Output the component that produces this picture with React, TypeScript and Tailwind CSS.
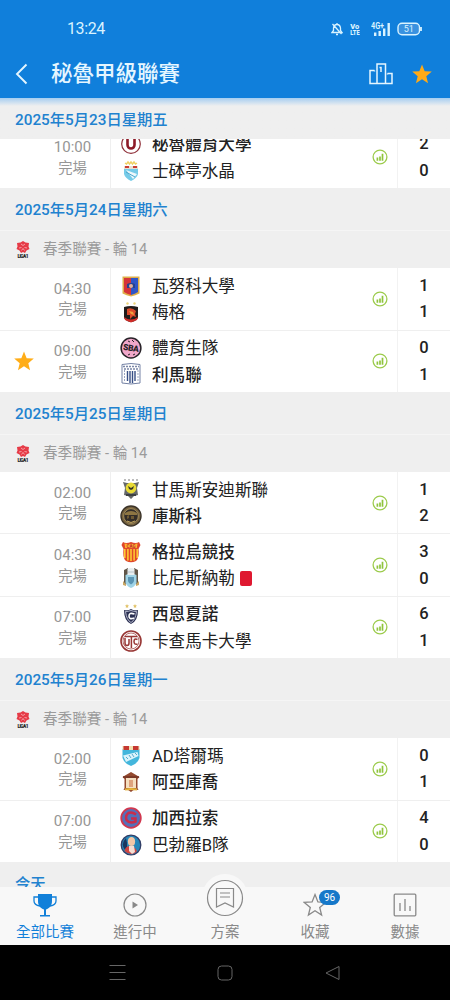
import type { ReactNode } from "react";
import clsx from "clsx";

type Team = { name: string; score: number; crest: string; winner?: boolean; redCard?: boolean };
type Match = { time: string; home: Team; away: Team; favorite?: boolean };
type Day = { date: string; matches: Match[] };

const STAR = "M12 1.6l2.9 7.3 7.8.5-6 5 1.9 7.6L12 17.8 5.4 22l1.9-7.6-6-5 7.8-.5z";

const firstMatch: Match = {
    time: "10:00",
    home: { name: "秘魯體育大學", score: 2, crest: "universitario", winner: true },
    away: { name: "士砵亭水晶", score: 0, crest: "cristal" },
};

const days: Day[] = [
    {
        date: "2025年5月24日星期六",
        matches: [
            {
                time: "04:30",
                home: { name: "瓦努科大學", score: 1, crest: "huanuco" },
                away: { name: "梅格", score: 1, crest: "melgar" },
            },
            {
                time: "09:00",
                favorite: true,
                home: { name: "體育生隊", score: 0, crest: "boys" },
                away: { name: "利馬聯", score: 1, crest: "lima", winner: true },
            },
        ],
    },
    {
        date: "2025年5月25日星期日",
        matches: [
            {
                time: "02:00",
                home: { name: "甘馬斯安迪斯聯", score: 1, crest: "comerciantes" },
                away: { name: "庫斯科", score: 2, crest: "cusco", winner: true },
            },
            {
                time: "04:30",
                home: { name: "格拉烏競技", score: 3, crest: "grau", winner: true },
                away: { name: "比尼斯納勒", score: 0, crest: "binacional", redCard: true },
            },
            {
                time: "07:00",
                home: { name: "西恩夏諾", score: 6, crest: "cienciano", winner: true },
                away: { name: "卡查馬卡大學", score: 1, crest: "utc" },
            },
        ],
    },
    {
        date: "2025年5月26日星期一",
        matches: [
            {
                time: "02:00",
                home: { name: "AD塔爾瑪", score: 0, crest: "tarma" },
                away: { name: "阿亞庫喬", score: 1, crest: "ayacucho", winner: true },
            },
            {
                time: "07:00",
                home: { name: "加西拉索", score: 4, crest: "garcilaso", winner: true },
                away: { name: "巴勃羅B隊", score: 0, crest: "pablo" },
            },
        ],
    },
];

const crests: Record<string, ReactNode> = {
    universitario: (
        <>
            <circle cx="11" cy="11" r="9.3" fill="#fff" stroke="#8f2f38" strokeWidth="1.2" />
            <path d="M7.5 5v7a3.500 3.500 0 0 0 7 0V5" fill="none" stroke="#8d1a27" strokeWidth="2.6" />
            <path d="M5.500 5h4M12.500 5h4" stroke="#8d1a27" />
        </>
    ),
    cristal: (
        <>
            <path d="M4 6h14v8q-1 4-7 7-6-3-7-7z" fill="#76cbe8" />
            <path d="M6 10l11 4-4 5z" fill="#eef8fb" />
            <path d="M6 12l9 5" stroke="#4ba6cd" />
            <path d="M4 6h14v3H4z" fill="#eadfd0" />
            <path d="M5 6h4v2H5zM13 6h4v2h-4z" fill="#c93c32" />
            <path d="M5 3l1.5 1L8 2l1.5 2L11 2l1.5 2L14 2l1.5 2L17 3" fill="none" stroke="#efd063" strokeWidth="1.4" />
        </>
    ),
    huanuco: (
        <>
            <path d="M2.5 1.5h17v17q-4 2-8.500 3-4.500-1-8.500-3z" fill="#dfae48" />
            <path d="M4 3h7v17q-4-1-7-3z" fill="#d53438" />
            <path d="M11 3h7v14q-3 2-7 3z" fill="#2f55c7" />
            <path d="M7 9q4-2 8 0v4H7z" fill="#27418c" />
            <circle cx="11" cy="11" r="2" fill="#e0b0a0" />
        </>
    ),
    melgar: (
        <>
            <path d="M4 6q7-2 14 0v11q-3 4-7 4-4 0-7-4z" fill="#221c1b" />
            <path d="M4 16q7 5 14 0l-1 3-6 2.500L5 19z" fill="#cf2c28" />
            <path d="M7 8q5-2 9 2l-1 3 1 3-3-1-3 3 0-4-3 0z" fill="#dd4a2b" />
            <path d="M9 10l4 1 1 3-3-1z" fill="#eda23f" />
            <circle cx="7.5" cy="2.5" r="1.2" fill="#eed57c" />
            <circle cx="14.5" cy="2.5" r="1.2" fill="#eed57c" />
        </>
    ),
    boys: (
        <>
            <circle cx="11" cy="11" r="9.9" fill="#f1a7ca" stroke="#292329" strokeWidth="1.5" />
            <path d="M8 4l2 1M12 3l2 2M8 18l2-1M13 18l2-1" stroke="#292329" />
            <text x="11" y="14" textAnchor="middle" fontSize="8.5" fontWeight="900" textLength="16" fill="#292329" transform="rotate(8 11 11)">SBA</text>
        </>
    ),
    lima: (
        <>
            <path d="M2 1.500q9-2 18 0v18.500q-9 2-18 0z" fill="#fff" stroke="#7482a5" />
            <path d="M3 3.500h16M4 6h14" stroke="#7b87a8" strokeWidth="1.4" strokeDasharray="2 1" />
            <path d="M7.5 8v10M10 8v12M12.5 8v12M15 8v10" stroke="#384f85" strokeWidth="1.4" />
            <path d="M4.5 7v12M18 7v12" stroke="#9aa4bf" strokeDasharray="2 1" />
        </>
    ),
    comerciantes: (
        <>
            <path d="M3 4l4 1h8l4-1-2 6 1 7-4 1-3 3-3-3-4-1 1-7z" fill="#65686a" />
            <circle cx="11" cy="10" r="5.4" fill="#e8da35" />
            <path d="M8 8l3 2 3-2-1 3-2 1-2-1z" fill="#343326" />
            <path d="M5 1v2M9 1v2M13 1v2M17 1v2" stroke="#999" strokeWidth="1.3" />
            <path d="M6 17h10" stroke="#3e4143" strokeWidth="2" />
        </>
    ),
    cusco: (
        <>
            <circle cx="11" cy="11" r="10" fill="#77633f" stroke="#3b3328" strokeWidth="1.4" />
            <circle cx="11" cy="11" r="7.3" fill="#332d28" stroke="#bea66b" strokeWidth=".7" />
            <path d="M5 8q6-4 12 0v2H5z" fill="#8d7542" />
            <path d="M7 14v-3l2-1v3zM11 14v-3h3v3z" fill="#6d5832" />
            <path d="M7 16q4 3 8 0" fill="none" stroke="#c5a65f" />
        </>
    ),
    grau: (
        <>
            <path d="M3 1q3 2 8 0 5 2 8 0l1.500 3L18.500 8q1 9-2.500 12-5 2.500-10 0Q2.500 17 3.500 8L1.500 4z" fill="#e0482c" />
            <path d="M4.800 8v9M7.900 8v11.500M11 8v12M14.100 8v11.500M17.200 8v9" stroke="#ffcf34" strokeWidth="1.5" />
            <path d="M4.500 2.600q6.500 1 13 0L16.800 7H5.200z" fill="#ffb52f" />
            <text x="11" y="6.800" textAnchor="middle" fontSize="4.500" fontWeight="900" fill="#c4372b">CAG</text>
        </>
    ),
    binacional: (
        <>
            <path d="M4 3l4-2v15l-4 2zM14 1l4 2v15l-4-2z" fill="#5f5548" />
            <path d="M3 14l3 3v2l-3-1zM19 14l-3 3v2l3-1z" fill="#c9a765" />
            <path d="M5.500 8q5.500-3 11 0v8q-2 4-5.500 5-3.500-1-5.500-5z" fill="#9fd3e6" />
            <path d="M7.500 2q3.500-2 7 0v6h-7z" fill="#e8edef" />
            <path d="M8 10h6v4q-1 3-3 3.500-2-.5-3-3.500z" fill="#5b95b4" />
            <path d="M8 5h6" stroke="#b6c2c8" />
        </>
    ),
    cienciano: (
        <>
            <path d="M4 7q4 1 7-1 3 2 7 1 0 11-7 14Q4 18 4 7z" fill="#2b3052" />
            <path d="M5.500 8.500q3 0 5.500-1 2.500 1 5.500 1-1 8.500-5.500 11-4.500-2.500-5.500-11z" fill="none" stroke="#d9dcec" strokeWidth=".8" />
            <path d="M14.500 11q-5.500-2-5.500 2t5 2" fill="none" stroke="#fff" strokeWidth="1.6" />
            <path d="M7 1l.6 1.3 1.4.2-1 1 .2 1.5L7 4.300 5.800 5 6 3.500l-1-1 1.400-.2zM15 1l.6 1.3 1.4.2-1 1 .2 1.500-1.200-.7-1.200.7.2-1.500-1-1 1.400-.2z" fill="#e2c36a" />
        </>
    ),
    utc: (
        <>
            <circle cx="11" cy="11" r="10" fill="#fff" stroke="#983735" strokeWidth="1.6" />
            <circle cx="11" cy="11" r="8" fill="none" stroke="#983735" strokeWidth=".7" />
            <path d="M5 8v5q0 2.500 2 2.500T9 13V9M5 6.500h12M11.400 6.500V18M17.500 9.500q-3.500-1.500-3.500 2t3.500 2.500" fill="none" stroke="#983735" strokeWidth="1.5" />
        </>
    ),
    tarma: (
        <>
            <path d="M2.500 4h17v9q-2 6-8.500 8-6.500-2-8.500-8z" fill="#43b6dc" />
            <path d="M3 10.500L17.500 7l1 4L6 17z" fill="#d9f3fb" />
            <path d="M6 12l2 2M9 10l2 3M12 9l2 3M15 8l2 2" stroke="#56a9ce" />
            <path d="M2.500 1h17v4h-17z" fill="#f2dfaf" />
            <path d="M3.500 1H9v4H3.500zM13 1h5.500v4H13z" fill="#c53831" />
        </>
    ),
    ayacucho: (
        <>
            <path d="M2.5 6L11 1l8.500 5-2 2v9l1 2q-5-1-7.500 2-3-3-7.500-2l1-2V8z" fill="#94492e" />
            <path d="M6 7h10v10H6z" fill="#f5dfc0" />
            <path d="M9 9h4v7H9z" fill="#dfa27c" />
            <path d="M3 6h16" stroke="#733525" strokeWidth="1.5" />
            <path d="M5 18.500q6-1 12 0" fill="none" stroke="#e5b43b" strokeWidth="2" />
        </>
    ),
    garcilaso: (
        <>
            <circle cx="11" cy="11" r="9.8" fill="#5370b9" stroke="#d1384f" strokeWidth="1.8" />
            <path d="M16 7.500Q12 4.500 8.500 6 5 8.500 6.500 13q3 4 9 1.500V11.500H11" fill="none" stroke="#c92d4b" strokeWidth="2.5" />
        </>
    ),
    pablo: (
        <>
            <circle cx="11" cy="11" r="9.8" fill="#2686b8" stroke="#303d66" strokeWidth="1.3" />
            <path d="M6 4q-7 7 1 14V9z" fill="#19375f" />
            <path d="M4.500 17q1-5 5.500-5t7 5q-2 3-6 3-3.500 0-6.500-3z" fill="#cf4541" />
            <ellipse cx="11.5" cy="7.5" rx="3.600" ry="4.500" fill="#f1c7a7" />
            <path d="M9 12h5l1 6-3 2-3-3z" fill="#f4dfd4" />
        </>
    ),
};

function Crest({ id }: { id: string }) {
    return (
        <svg viewBox="0 0 22 22" className="h-[22px] w-[22px] shrink-0">
            {crests[id]}
        </svg>
    );
}

function LeagueLogo() {
    return (
        <svg viewBox="0 0 18 20" className="h-5 w-[18px]">
            <path d="M9 1l2.500 1.500L15 3l-.5 3.500L15.500 9l-3 1.500L11 13l-2-1-2 1-1.500-2.500-3-1.500 1-2.500L3 3l3.500-.5z" fill="#e63b47" />
            <path d="M7 4l2 1.500L11 4M5 8l2.500-.5M13 8l-2.500-.5M7.500 10.500L9 8.500l1.500 2" fill="none" stroke="#f9b6ba" strokeWidth=".8" />
            <text x="9" y="18" textAnchor="middle" fontSize="4.800" fontWeight="900" textLength="11" fill="#222">LIGA1</text>
        </svg>
    );
}

function StatsIcon() {
    return (
        <svg viewBox="0 0 16 16" className="h-4 w-4">
            <circle cx="8" cy="8" r="6.9" fill="none" stroke="#9ccb4c" strokeWidth="1.3" />
            <path d="M5.400 8.500v3.200M8 7.500v4.200M10.500 4.800v6.900" stroke="#8fc43c" strokeWidth="1.7" />
        </svg>
    );
}

function StatusBar() {
    return (
        <div className="flex h-[49px] items-end justify-between pb-[11px] pl-[67px] pr-[27px] text-[#d9f3ff]">
            <span className="text-[16px] leading-[18px] tracking-[-0.4px]">13:24</span>
            <div className="flex h-[18px] items-center">
                <svg viewBox="0 0 12 14" className="mr-[7px] h-[14px] w-3" fill="none" stroke="currentColor" strokeWidth="1.3">
                    <path d="M1 10.500h10L9.500 8.500V6Q9 2.500 6 2.500T2.500 6v2.500zM6 1v1.500M5 12.500h2M1.500 2l9 10" />
                </svg>
                <svg viewBox="0 0 10 14" className="mr-[11px] h-[14px] w-[10px]" fill="currentColor">
                    <text x=".3" y="6.500" fontSize="8" fontWeight="900" textLength="9" lengthAdjust="spacingAndGlyphs">Vo</text>
                    <text x=".3" y="13.300" fontSize="8" fontWeight="900" textLength="9.300" lengthAdjust="spacingAndGlyphs">LTE</text>
                </svg>
                <svg viewBox="0 0 20 14" className="mr-[6px] h-[14px] w-5" fill="currentColor">
                    <text x="0" y="7" fontSize="9" fontWeight="700" textLength="13" lengthAdjust="spacingAndGlyphs">4G+</text>
                    <path d="M3 10.500h2.400V14H3zM7.500 9h2.400v5H7.500zM12 6.500h2.400V14H12zM16.500 1h2.400v13h-2.400z" />
                </svg>
                <svg viewBox="0 0 26 14" className="h-[14px] w-[26px]">
                    <rect x="1" y="1.200" width="21.500" height="11.600" rx="4" fill="#3a92e0" stroke="currentColor" strokeWidth="1.4" />
                    <path d="M24 5v4" stroke="currentColor" strokeWidth="1.8" />
                    <text x="11.800" y="10.300" textAnchor="middle" fontSize="9" fill="currentColor">51</text>
                </svg>
            </div>
        </div>
    );
}

function DateRow({ children }: { children: ReactNode }) {
    return (
        <div className="flex h-[41.3px] items-center bg-[#efefef] pl-[15px] pt-[2px] text-[15.3px] font-medium text-[#2182cf]">
            {children}
        </div>
    );
}

function TeamRow({ team }: { team: Team }) {
    return (
        <div className="flex h-[26.6px] items-center">
            <Crest id={team.crest} />
            <span className={clsx("ml-[10px] whitespace-nowrap pt-[3px] text-[16.6px] text-[#222]", team.winner && "font-medium")}>{team.name}</span>
            {team.redCard && <span className="ml-[5px] h-[15px] w-3 rounded-[2px] bg-[#df1830]" />}
        </div>
    );
}

function MatchRow({ match }: { match: Match }) {
    return (
        <div className="flex h-[62.3px] border-b border-[#efefef] bg-white">
            <div className="flex w-[35px] items-center justify-end">
                {match.favorite && (
                    <svg viewBox="0 0 24 24" className="h-[22px] w-[22px]" fill="#ffad18">
                        <path d={STAR} />
                    </svg>
                )}
            </div>
            <div className="flex w-[76px] flex-col items-center justify-center border-r border-[#efefef] pt-px text-[14.3px] leading-[20.5px] text-[#969696]">
                <span className="text-[15px]">{match.time}</span>
                <span>完場</span>
            </div>
            <div className="flex flex-1 flex-col justify-center pl-[9px]">
                <TeamRow team={match.home} />
                <TeamRow team={match.away} />
            </div>
            <div className="flex w-[25px] items-center">
                <StatsIcon />
            </div>
            <div className="flex w-[53px] flex-col items-center justify-center border-l border-[#f2f2f2] pt-px text-[16.5px] font-medium leading-[26.6px] text-[#222]">
                <span>{match.home.score}</span>
                <span>{match.away.score}</span>
            </div>
        </div>
    );
}

function NavItem({ label, active, children }: { label: string; active?: boolean; children: ReactNode }) {
    return (
        <div className={clsx("relative flex flex-1 flex-col items-center pt-[6px]", active ? "text-[#1180d9]" : "text-[#898989]")}>
            <div className="relative flex h-6 w-6 justify-center">{children}</div>
            <span className="mt-[6px] text-[14.5px] leading-[20px]">{label}</span>
        </div>
    );
}

export default function App() {
    return (
        <div className="flex h-[1000px] w-[450px] flex-col overflow-hidden bg-[#efefef] font-[Roboto,'Noto_Sans_CJK_TC',sans-serif]">
            <header className="h-[98px] shrink-0 bg-[#107fdb]">
                <StatusBar />
                <div className="flex h-[49px] items-center pl-[15px] pr-[17px] text-[#e5f6ff]">
                    <svg viewBox="0 0 13 22" className="h-[22px] w-[13px]" fill="none" stroke="currentColor" strokeWidth="1.9">
                        <path d="M11.5 1.500L2 11l9.500 9.500" />
                    </svg>
                    <h1 className="ml-[23px] flex-1 text-[21.5px] font-medium leading-none">秘魯甲級聯賽</h1>
                    <svg viewBox="0 0 24 22" className="mr-[18px] h-[22px] w-6" fill="none" stroke="currentColor" strokeWidth="1.5">
                        <path d="M8 20.500V1h8.500v19.500M5.500 7.500H1v13h22v-10h-4.500M5.500 7.500v1M18.500 10.500v1M10.500 4.500H12V9" />
                    </svg>
                    <svg viewBox="0 0 24 24" className="h-[22px] w-[22px]" fill="#ffaa16">
                        <path d={STAR} />
                    </svg>
                </div>
            </header>

            {/* sticky date of the section that is scrolled under the header */}
            <div className="h-[41px] shrink-0 bg-linear-to-b from-[#a5cdf0] to-[#efefef] to-[8px]">
                <div className="flex h-full items-center pl-[15px] pt-[3px] text-[15.3px] font-medium text-[#2182cf]">2025年5月23日星期五</div>
            </div>

            <main className="min-h-0 flex-1 overflow-hidden">
                <div className="-mt-[12.4px]">
                    <MatchRow match={firstMatch} />
                    {days.map((day) => (
                        <section key={day.date}>
                            <DateRow>{day.date}</DateRow>
                            <div className="flex h-[38px] items-center border-t border-[#f5f5f5] bg-[#efefef] pl-[14px]">
                                <LeagueLogo />
                                <span className="ml-[11px] text-[14.6px] text-[#9b9b9b]">春季聯賽 - 輪 14</span>
                            </div>
                            {day.matches.map((match) => (
                                <MatchRow key={match.home.name} match={match} />
                            ))}
                        </section>
                    ))}
                    <DateRow>今天</DateRow>
                </div>
            </main>

            <nav className="relative flex h-[58px] shrink-0 bg-[#f8f8f8]">
                <div className="absolute -top-[13px] left-[202px] h-[46px] w-[46px] rounded-full bg-[#f8f8f8]" />
                <NavItem label="全部比賽" active>
                    <svg viewBox="0 0 24 24" className="h-6 w-6">
                        <path d="M5 1h14v7c0 5-2.500 7-6 8.500V22h4v1.500H7V22h4v-5.500C7.500 15 5 13 5 8z" fill="currentColor" />
                        <path d="M5 4H1v4q0 4 6 5M19 4h4v4q0 4-6 5" fill="none" stroke="currentColor" strokeWidth="1.3" />
                    </svg>
                </NavItem>
                <NavItem label="進行中">
                    <svg viewBox="0 0 24 24" className="h-6 w-6">
                        <circle cx="12" cy="12" r="11" fill="none" stroke="currentColor" strokeWidth="1.2" />
                        <path d="M9.5 8.500l5.500 3.500-5.500 3.500z" fill="currentColor" />
                    </svg>
                </NavItem>
                <NavItem label="方案">
                    <svg viewBox="0 0 38 38" className="-mt-[14px] h-[38px] w-[38px] shrink-0" fill="none" stroke="currentColor" strokeWidth="1.2">
                        <circle cx="19" cy="19" r="17.5" />
                        <path d="M10.500 9.500h17V28L19 24l-8.500 4zM14 14h10M14 18h10" />
                    </svg>
                </NavItem>
                <NavItem label="收藏">
                    <svg viewBox="0 0 24 24" className="h-6 w-6" fill="none" stroke="currentColor" strokeWidth="1.3">
                        <path d={STAR} />
                    </svg>
                    <span className="absolute -top-[3px] left-[16px] flex h-[15px] w-[21px] items-center justify-center rounded-full bg-[#1678c9] text-[10px] leading-none text-white">96</span>
                </NavItem>
                <NavItem label="數據">
                    <svg viewBox="0 0 24 24" className="h-6 w-6" fill="none" stroke="currentColor" strokeWidth="1.3">
                        <rect x="1.2" y="1.2" width="21.6" height="21.6" rx="1" />
                        <path d="M7 10v8M12 6v12M17 13v5" />
                    </svg>
                </NavItem>
            </nav>

            <footer className="flex h-[55px] shrink-0 items-center justify-between bg-black px-[109px] text-[#666]">
                <svg viewBox="0 0 17 17" className="h-[17px] w-[17px]" fill="none" stroke="currentColor">
                    <path d="M.5 1.500h16M.5 8.500h16M.5 15.500h16" />
                </svg>
                <svg viewBox="0 0 16 16" className="h-4 w-4" fill="none" stroke="currentColor">
                    <rect x="1" y="1" width="14" height="14" rx="3.5" />
                </svg>
                <svg viewBox="0 0 17 16" className="h-4 w-[17px]" fill="none" stroke="currentColor" strokeLinejoin="round">
                    <path d="M15 1.500v13L2 8z" />
                </svg>
            </footer>
        </div>
    );
}
